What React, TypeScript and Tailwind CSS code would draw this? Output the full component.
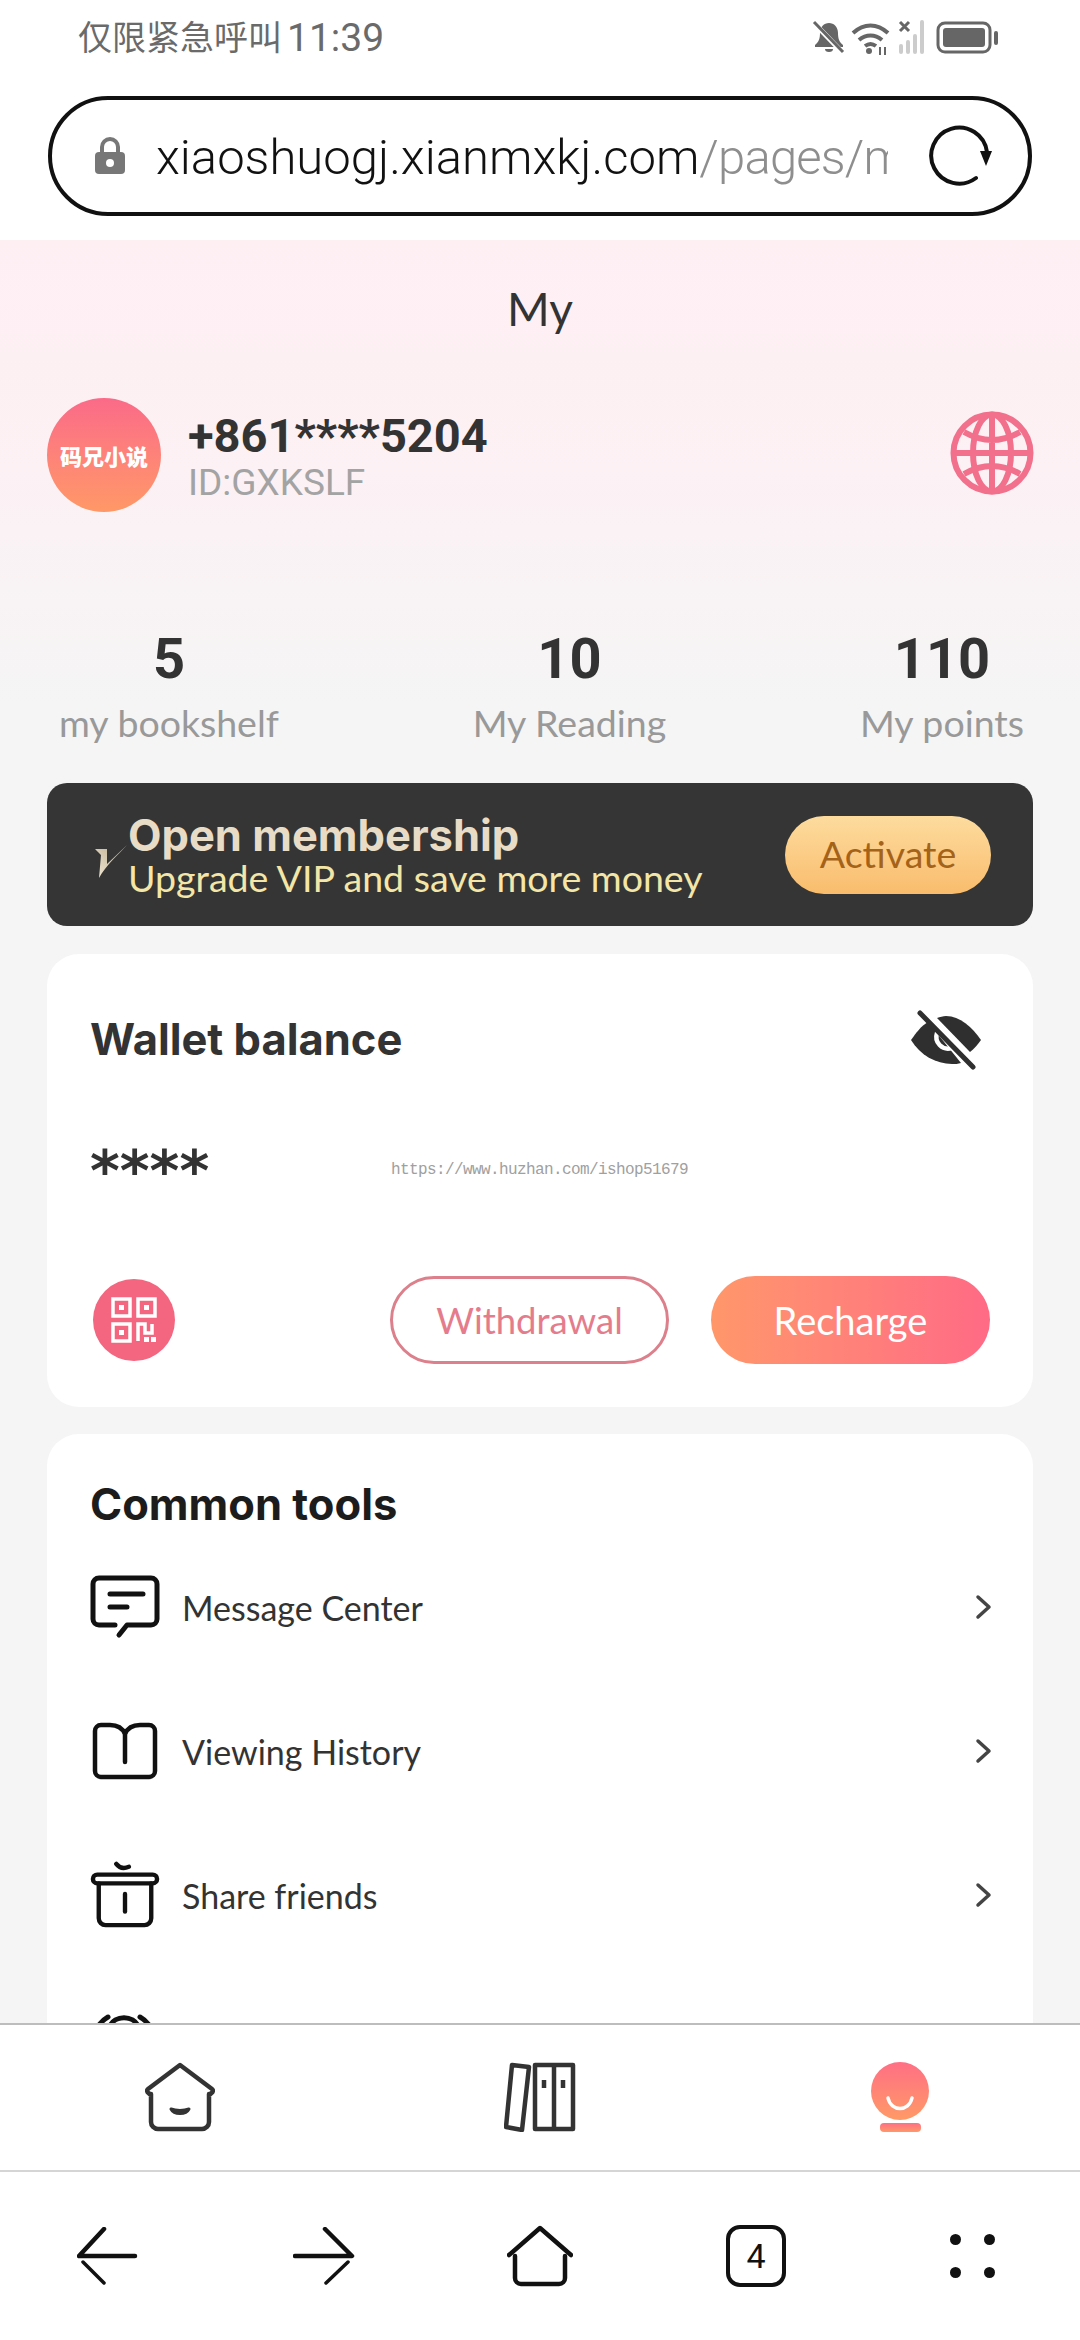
const sans = "font-['Lato','Noto_Sans_CJK_SC',sans-serif]";

function Stat({ n, label }: { n: string; label: string }) {
  return (
    <div className="flex flex-col items-center">
      <div className="text-[56px] leading-[64px] font-bold text-[#333] font-['Roboto',sans-serif]">{n}</div>
      <div className="text-[37.5px] leading-[44px] mt-[10px] text-[#999]">{label}</div>
    </div>
  );
}

function Chevron() {
  return (
    <svg width="18" height="26" viewBox="0 0 18 26" fill="none" stroke="#444" strokeWidth="3.5" strokeLinecap="round" strokeLinejoin="round" className="-mr-[1px]">
      <path d="M3 3l11 10L3 23" />
    </svg>
  );
}

function Row({ icon, label, last }: { icon: React.ReactNode; label: string; last?: boolean }) {
  return (
    <div className="flex items-center h-[144px]">
      <div className="w-[70px] h-[70px] flex items-center justify-center">{icon}</div>
      <div className="ml-[22px] flex-1 text-[34px] text-[#333]">{label}</div>
      {last ? null : <Chevron />}
    </div>
  );
}

const MsgIcon = (
  <svg width="70" height="64" viewBox="0 0 70 64" fill="none" stroke="#111" strokeWidth="5" strokeLinecap="round" strokeLinejoin="round">
    <path d="M25 50H9a6 6 0 0 1-6-6V9a6 6 0 0 1 6-6h52a6 6 0 0 1 6 6v35a6 6 0 0 1-6 6H37l-8 10" />
    <path d="M20 19h33M20 32h17" />
  </svg>
);
const BookIcon = (
  <svg width="66" height="58" viewBox="0 0 66 58" fill="none" stroke="#111" strokeWidth="4.5" strokeLinecap="round" strokeLinejoin="round">
    <path d="M33 12C30 5 24 3 18 3h-9a6 6 0 0 0-6 6v40a6 6 0 0 0 6 6h48a6 6 0 0 0 6-6V9a6 6 0 0 0-6-6h-9c-6 0-12 2-15 9v28" />
  </svg>
);
const BoxIcon = (
  <svg width="72" height="68" viewBox="0 0 72 68" fill="none" stroke="#111" strokeWidth="4.5" strokeLinecap="round" strokeLinejoin="round">
    <path d="M27 2c3 4 8 5 13 3" />
    <rect x="3" y="13" width="66" height="9" rx="4.5" />
    <path d="M9 22v36a7 7 0 0 0 7 7h40a7 7 0 0 0 7-7V22" />
    <path d="M36 33v18" />
  </svg>
);
const HalfIcon = (
  <svg width="70" height="70" viewBox="0 0 70 70" fill="none" stroke="#111" strokeWidth="5" strokeLinecap="round">
    <path d="M20 22A15 13 0 0 1 48 22" />
    <path d="M7 24Q11 17 18 13M50 13Q57 17 61 24" />
    <path d="M8 40v10a12 12 0 0 0 12 12h28a12 12 0 0 0 12-12V40" />
  </svg>
);

export default function App() {
  return (
    <div className={`w-[1080px] h-[2340px] flex flex-col overflow-hidden bg-[#f5f5f5] ${sans}`}>
      {/* browser chrome */}
      <div className="bg-white h-[240px] shrink-0 flex flex-col">
        <div className="h-[76px] pl-[78px] pr-[78px] flex items-center justify-between">
          <div className="flex items-center text-[#6a6a6a] font-['Roboto','Noto_Sans_CJK_SC',sans-serif] whitespace-nowrap">
            <span className="text-[34px]">仅限紧急呼叫</span>
            <span className="text-[39px] ml-[5px]">11:39</span>
          </div>
          <svg width="190" height="36" viewBox="0 0 190 36" fill="none">
            <path d="M3 25c4-3 5-7 5-12 0-6 4-10 9-10s9 4 9 10c0 5 1 9 5 12v2H3z" fill="#666" />
            <path d="M13 29a4 3 0 0 0 8 0z" fill="#666" />
            <path d="M2 3l28 29" stroke="#fff" strokeWidth="5" />
            <path d="M2 2l29 30" stroke="#666" strokeWidth="3" />
            <path d="M41 13c11-10 24-10 35 0M47 20c7-6 16-6 23 0M53 26c4-3 7-3 11 0" stroke="#666" strokeWidth="4" />
            <circle cx="57" cy="31" r="3" fill="#666" />
            <path d="M68 27v8M73 27v8" stroke="#666" strokeWidth="2" />
            <path d="M88 2l9 9M97 2l-9 9" stroke="#666" strokeWidth="3" />
            <path d="M89 26v6M96 22v10M103 16v16M110 2v30" stroke="#ccc" strokeWidth="4" strokeLinecap="round" />
            <rect x="126" y="3" width="52" height="29" rx="7" stroke="#666" strokeWidth="3" />
            <rect x="131" y="8" width="42" height="19" rx="3" fill="#666" />
            <rect x="182" y="11" width="4" height="14" rx="2" fill="#666" />
          </svg>
        </div>
        <div className="mx-[48px] mt-[20px] h-[120px] border-[4px] border-[#111] rounded-full flex items-center pl-[42px] font-['Roboto',sans-serif]">
          <svg width="32" height="38" viewBox="0 0 32 38" className="shrink-0">
            <path d="M8 17V10a8 8 0 0 1 16 0v7" fill="none" stroke="#777" strokeWidth="4" />
            <rect x="1" y="15" width="30" height="22" rx="4" fill="#777" />
            <circle cx="16" cy="26" r="4" fill="#fff" />
          </svg>
          <div className="ml-[30px] w-[732px] overflow-hidden whitespace-nowrap text-[49px] leading-[60px] pt-[3px] font-light text-[#111]">
            xiaoshuogj.xianmxkj.com<span className="text-[#8e8e8e] tracking-[-0.8px]">/pages/m</span>
          </div>
          <svg width="64" height="62" viewBox="0 0 64 62" fill="none" className="ml-[41px] shrink-0">
            <path d="M58 27A28 28 0 1 0 47 53" stroke="#111" strokeWidth="4" strokeLinecap="round" />
            <path d="M51 26l12 0-6 15z" fill="#111" />
          </svg>
        </div>
      </div>

      {/* page */}
      <div className="flex-1 min-h-0 overflow-hidden bg-gradient-to-b from-[#feeff3] from-0% via-[#fcf1f4] via-[13%] to-[#f5f5f5] to-[26%]">
        <div className="h-[136px] flex items-center justify-center text-[46px] text-[#333]">My</div>
        <div className="mt-[22px] pl-[47px] pr-[46px] flex items-center h-[114px]">
          <div className="w-[114px] h-[114px] rounded-full bg-gradient-to-b from-[#fb6a88] to-[#ff9866] flex items-center justify-center text-white text-[22px] font-black font-['Noto_Sans_CJK_SC',sans-serif] whitespace-nowrap">码兄小说</div>
          <div className="ml-[27px] flex-1 pt-[5px]">
            <div className="text-[47px] leading-[50px] font-bold text-[#333] font-['Roboto',sans-serif]">+861****5204</div>
            <div className="text-[37px] leading-[42px] text-[#a3a3a3] font-['Roboto',sans-serif] mt-[1px]">ID:GXKSLF</div>
          </div>
          <svg width="84" height="84" viewBox="0 0 84 84" fill="none" stroke="#f2708c" strokeWidth="6" className="-mt-[4px]">
            <circle cx="42" cy="42" r="38.5" />
            <ellipse cx="42" cy="42" rx="19" ry="38.5" />
            <path d="M42 3v78M3 42h78M14 21Q42 37 70 21M14 63Q42 47 70 63" />
          </svg>
        </div>

        <div className="mt-[115px] pl-[59px] pr-[56px] flex justify-between">
          <Stat n="5" label="my bookshelf" />
          <Stat n="10" label="My Reading" />
          <Stat n="110" label="My points" />
        </div>

        <div className="mt-[38px] mx-[47px] h-[143px] rounded-[20px] bg-[#353535] flex items-center pl-[48px] pr-[42px]">
          <svg width="34" height="36" viewBox="0 0 34 36" className="mt-[16px] shrink-0">
            <defs>
              <linearGradient id="vg" x1="0" y1="1" x2="1" y2="0">
                <stop offset="0" stopColor="#f2e8d5" />
                <stop offset="1" stopColor="#b5a587" />
              </linearGradient>
            </defs>
            <path d="M0 4h12l0 15L32 0C24 9 11 20 4 33L6 10z" fill="url(#vg)" />
          </svg>
          <div className="flex-1 -ml-[1px]">
            <div className="text-[43.5px] leading-[46px] font-bold text-[#e8dcc6] font-['Inter',sans-serif]">Open membership</div>
            <div className="text-[37.5px] leading-[40px] text-[#f4e6a6]">Upgrade VIP and save more money</div>
          </div>
          <div className="w-[206px] h-[78px] rounded-full bg-gradient-to-b from-[#fddc9e] to-[#f9bc6c] flex items-center justify-center text-[37.5px] text-[#a5631a]">Activate</div>
        </div>

        <div className="mt-[28px] mx-[47px] h-[453px] rounded-[32px] bg-white px-[43px] flex flex-col">
          <div className="h-[172px] flex items-center justify-between">
            <div className="text-[43.5px] font-bold text-[#333] font-['Inter',sans-serif]">Wallet balance</div>
            <svg width="72" height="60" viewBox="0 0 72 60" fill="none" className="mr-[8px] -mt-[1px]">
              <path d="M18 12C11 16 6 23 1 30C10 45 26 54 42 54C45 54 48 54 51 53Z" fill="#2f2f2f" />
              <path d="M27 8C30 7 33 6 36 6C50 6 62 17 71 30C68 34 64 39 60 42Z" fill="#2f2f2f" />
              <path d="M27 23C24 32 32 41 42 38" stroke="#fff" strokeWidth="4.5" strokeLinecap="round" />
              <path d="M10 3L63 57" stroke="#2f2f2f" strokeWidth="5" strokeLinecap="round" />
            </svg>
          </div>
          <div className="relative h-[60px] mt-[12px] flex items-center text-[57px] leading-[60px] font-bold text-[#333] font-['DejaVu_Sans',sans-serif]">
            <span className="pt-[6px]">****</span>
            <span className="absolute left-[301px] top-[20px] text-[16px] leading-[24px] font-normal text-[#a0a0a0] font-['Liberation_Mono',monospace] tracking-[-0.6px] whitespace-nowrap">https://www.huzhan.com/ishop51679</span>
          </div>
          <div className="mt-[78px] flex items-center">
            <div className="w-[82px] h-[82px] ml-[3px] rounded-full bg-[#f4657f] flex items-center justify-center">
              <svg width="46" height="46" viewBox="0 0 46 46" fill="none" stroke="#fff" strokeWidth="3.5">
                <rect x="2" y="2" width="17" height="17" />
                <rect x="27" y="2" width="17" height="17" />
                <rect x="2" y="27" width="17" height="17" />
                <path d="M27 44V27h7v9h7V27" />
                <rect x="8" y="8" width="5" height="5" fill="#fff" stroke="none" />
                <rect x="33" y="8" width="5" height="5" fill="#fff" stroke="none" />
                <rect x="8" y="33" width="5" height="5" fill="#fff" stroke="none" />
                <rect x="33" y="40" width="5" height="5" fill="#fff" stroke="none" />
                <rect x="40" y="40" width="5" height="5" fill="#fff" stroke="none" />
              </svg>
            </div>
            <div className="ml-auto w-[279px] h-[88px] rounded-full border-[3px] border-[#dc808c] flex items-center justify-center text-[36.5px] text-[#e57c8c]">Withdrawal</div>
            <div className="ml-[42px] w-[279px] h-[88px] rounded-full bg-gradient-to-r from-[#ff976a] to-[#ff6a85] flex items-center justify-center text-[38px] text-white">Recharge</div>
          </div>
        </div>

        <div className="mt-[27px] mx-[47px] h-[700px] rounded-[32px] bg-white px-[43px] pr-[41px]">
          <div className="pt-[44px] text-[43.5px] leading-[52px] font-bold text-[#1c1c1c] font-['Inter',sans-serif]">Common tools</div>
          <div className="mt-[5px]">
            <Row icon={MsgIcon} label="Message Center" />
            <Row icon={BookIcon} label="Viewing History" />
            <Row icon={BoxIcon} label="Share friends" />
            <Row icon={HalfIcon} label="" last />
          </div>
        </div>
      </div>

      {/* tab bar */}
      <div className="h-[147px] shrink-0 bg-white border-t-[2px] border-[#bdbdbd] grid grid-cols-3 items-start pt-[37px]">
        <div className="flex justify-center">
          <svg width="70" height="70" viewBox="0 0 70 70" fill="none" stroke="#333" strokeWidth="4.5" strokeLinecap="round" strokeLinejoin="round">
            <path d="M35 3L3 27c-2 2 0 5 3 5v28a7 7 0 0 0 7 7h44a7 7 0 0 0 7-7V32c3 0 5-3 3-5z" />
            <path d="M26 47c3 6 15 6 18 0c-5 2-13 2-18 0z" fill="#333" strokeWidth="3" />
          </svg>
        </div>
        <div className="flex justify-center">
          <svg width="72" height="70" viewBox="0 0 72 70" fill="none" stroke="#333" strokeWidth="4.5" strokeLinejoin="round">
            <path d="M8 3l17 2-7 63-16-3z" />
            <rect x="31" y="3" width="38" height="64" />
            <path d="M50 3v64" />
            <path d="M40 18v8M59 18v8" strokeWidth="4.5" />
          </svg>
        </div>
        <div className="flex justify-center">
          <svg width="62" height="70" viewBox="0 0 62 70">
            <defs>
              <linearGradient id="me" x1="0" y1="0" x2="0" y2="1">
                <stop offset="0" stopColor="#ff6f85" />
                <stop offset="1" stopColor="#ff9a66" />
              </linearGradient>
            </defs>
            <circle cx="31" cy="29" r="29" fill="url(#me)" />
            <path d="M19 36c3 14 21 14 24 0" stroke="#fff" strokeWidth="3.5" strokeLinecap="round" fill="none" />
            <rect x="11" y="61" width="41" height="9" rx="4" fill="url(#me)" />
          </svg>
        </div>
      </div>

      {/* browser nav */}
      <div className="h-[170px] shrink-0 bg-white border-t-[2px] border-[#d5d5d5] grid grid-cols-5 items-center justify-items-center">
        <svg width="62" height="58" viewBox="0 0 62 58" fill="none" stroke="#111" strokeLinecap="round">
          <path d="M27 2L2 29h56" strokeWidth="4.5" strokeLinejoin="round" />
          <path d="M6 35l21 21" strokeWidth="3.5" />
        </svg>
        <svg width="62" height="58" viewBox="0 0 62 58" fill="none" stroke="#111" strokeLinecap="round">
          <path d="M32 2l27 27H2" strokeWidth="4.5" strokeLinejoin="round" />
          <path d="M55 35L33 56" strokeWidth="3.5" />
        </svg>
        <svg width="66" height="62" viewBox="0 0 66 62" fill="none" stroke="#111" strokeWidth="4.5" strokeLinecap="round" strokeLinejoin="round">
          <path d="M2 30L33 3l31 27" />
          <path d="M8 31v22a6 6 0 0 0 6 6h38a6 6 0 0 0 6-6V31" />
        </svg>
        <div className="w-[60px] h-[62px] rounded-[14px] border-[4px] border-[#111] flex items-center justify-center text-[34px] text-[#111] font-['Roboto',sans-serif]">4</div>
        <div className="w-[45px] h-[44px] grid grid-cols-2 content-between justify-between">
          <div className="w-[11px] h-[11px] rounded-full bg-[#111]" />
          <div className="w-[11px] h-[11px] rounded-full bg-[#111] justify-self-end" />
          <div className="w-[11px] h-[11px] rounded-full bg-[#111]" />
          <div className="w-[11px] h-[11px] rounded-full bg-[#111] justify-self-end" />
        </div>
      </div>
    </div>
  );
}
